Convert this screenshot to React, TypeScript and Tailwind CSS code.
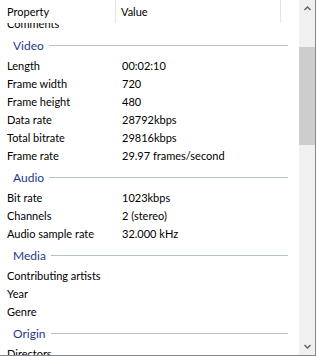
import { Fragment } from 'react';

type Item = { label: string; value?: string };
type Group = { title: string; items: Item[] };

const groups: Group[] = [
  {
    title: 'Video',
    items: [
      { label: 'Length', value: '00:02:10' },
      { label: 'Frame width', value: '720' },
      { label: 'Frame height', value: '480' },
      { label: 'Data rate', value: '28792kbps' },
      { label: 'Total bitrate', value: '29816kbps' },
      { label: 'Frame rate', value: '29.97 frames/second' },
    ],
  },
  {
    title: 'Audio',
    items: [
      { label: 'Bit rate', value: '1023kbps' },
      { label: 'Channels', value: '2 (stereo)' },
      { label: 'Audio sample rate', value: '32.000 kHz' },
    ],
  },
  {
    title: 'Media',
    items: [{ label: 'Contributing artists' }, { label: 'Year' }, { label: 'Genre' }],
  },
  {
    title: 'Origin',
    items: [{ label: 'Directors' }],
  },
];

function Row({ label, value }: Item) {
  return (
    <div className="flex h-[18px] items-center leading-[18px]">
      <span className="w-[122px] shrink-0 pl-[7px]">{label}</span>
      <span>{value}</span>
    </div>
  );
}

function Heading({ title }: { title: string }) {
  return (
    <div className="flex h-6 pt-1">
      <span className="pl-[13px] pr-[5px] text-[12px] leading-[18px] text-[#1e3a8c]">{title}</span>
      <div className="mt-2 mr-[11px] h-px flex-1 bg-[#b3bfcf]" />
    </div>
  );
}

export default function App() {
  return (
    <div
      className="h-[356px] w-[318px] overflow-hidden bg-white text-[11px] text-[#000]"
      style={{ fontFamily: 'Lato, "Noto Sans", sans-serif' }}
    >
      <div className="flex h-[356px] w-[316px] border-r border-b border-[#828790]">
        {/* list */}
        <div className="relative flex-1 overflow-hidden">
          <div className="relative z-10 flex h-[23px] bg-white">
            <div className="flex w-[116px] items-center border-r border-[#e5e5e5] pt-px pl-[7px]">Property</div>
            <div className="flex w-[165px] items-center border-r border-[#e5e5e5] pt-px pl-[5px]">Value</div>
          </div>
          <div className="-mt-2">
            <Row label="Comments" />
            {groups.map((g) => (
              <Fragment key={g.title}>
                <Heading title={g.title} />
                {g.items.map((it) => (
                  <Row key={it.label} {...it} />
                ))}
              </Fragment>
            ))}
          </div>
        </div>
        {/* scrollbar */}
        <div className="flex w-4 flex-col bg-[#f0f0f0]">
          <div className="flex h-[17px] items-center justify-center">
            <svg width="7" height="5" viewBox="0 0 7 5" fill="#606060">
              <path d="M3.5 0 L7 3.5 L6 4.5 L3.5 2 L1 4.5 L0 3.5 Z" />
            </svg>
          </div>
          <div className="mt-[30px] h-[98px] bg-[#cdcdcd]" />
          <div className="flex-1" />
          <div className="flex h-[17px] items-center justify-center">
            <svg width="7" height="5" viewBox="0 0 7 5" fill="#606060">
              <path d="M3.5 5 L7 1.5 L6 0.5 L3.5 3 L1 0.5 L0 1.5 Z" />
            </svg>
          </div>
        </div>
      </div>
    </div>
  );
}
